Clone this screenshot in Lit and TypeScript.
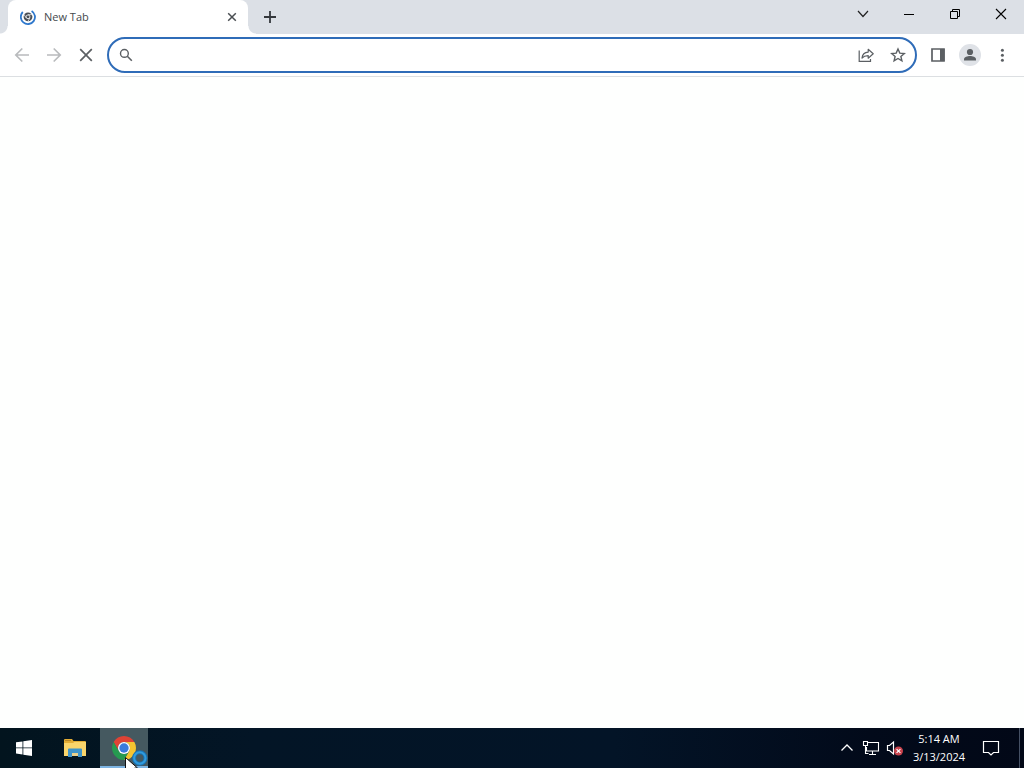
import { LitElement, html, css } from "lit";
import { customElement } from "lit/decorators.js";

const sector = (color: string, turn: number) => html`
  <svg class="sector" viewBox="0 0 24 24" aria-hidden="true">
    <g transform="rotate(${turn} 12 12)">
      <path fill="${color}" d="M1.61 6A12 12 0 0 1 22.39 6H12A6 6 0 0 0 6.8 15Z" />
    </g>
  </svg>
`;

@customElement("browser-tabs")
export class BrowserTabs extends LitElement {
  static styles = css`
    :host {
      display: flex;
      align-items: stretch;
      height: 34px;
      background: #dce0e6;
    }
    .edge {
      width: 8px;
    }
    .edge.left {
      background: radial-gradient(circle at 0 0, #dce0e6 7px, #fff 8px) 0 26px / 8px 8px no-repeat;
    }
    .edge.right {
      background: radial-gradient(circle at 100% 0, #dce0e6 7px, #fff 8px) 0 26px / 8px 8px no-repeat;
    }
    .tab {
      display: flex;
      align-items: center;
      box-sizing: border-box;
      width: 240px;
      padding: 0 8px 0 12px;
      gap: 8px;
      background: #fff;
      border-radius: 8px 8px 0 0;
    }
    .title {
      flex: 1;
      font-size: 11px;
      line-height: 16px;
      color: #45494d;
    }
    button {
      display: grid;
      place-items: center;
      padding: 0;
      border: 0;
      background: none;
      font: inherit;
    }
    .close {
      width: 16px;
      height: 16px;
    }
    .add {
      width: 28px;
      height: 34px;
    }
    .window {
      display: flex;
      margin-left: auto;
    }
    .window button {
      width: 46px;
      height: 28px;
    }
    svg {
      display: block;
    }
  `;

  render() {
    return html`
      <span class="edge left"></span>
      <div class="tab">
        <svg width="16" height="16" viewBox="0 0 16 16" fill="none" aria-hidden="true">
          <path d="M2.8 3A7.1 7.1 0 1 0 11.6 1.9" stroke="#2f78cc" stroke-width="1.8" />
          <circle cx="8" cy="7.8" r="4.4" fill="#4b4f55" />
          <circle cx="8" cy="7.8" r="1.9" fill="#4b4f55" stroke="#eceef0" stroke-width=".9" />
          <path d="M8 5.700h4M6.100 8.900 4.100 5.500M9.900 8.900 8 12.300" stroke="#eceef0" stroke-width=".8" />
        </svg>
        <span class="title">New Tab</span>
        <button class="close" aria-label="Close tab">
          <svg width="16" height="16" viewBox="0 0 16 16" fill="none" stroke="#4a4e52" stroke-width="1.500">
            <path d="m4.200 4.200 7.600 7.600M11.800 4.200l-7.600 7.600" />
          </svg>
        </button>
      </div>
      <span class="edge right"></span>
      <button class="add" aria-label="New tab">
        <svg width="14" height="14" viewBox="0 0 14 14" fill="none" stroke="#34383c" stroke-width="1.800">
          <path d="M1 7h12M7 1v12" />
        </svg>
      </button>
      <div class="window">
        <button aria-label="Search tabs">
          <svg width="12" height="12" viewBox="0 0 12 12" fill="none" stroke="#222" stroke-width="1.200">
            <path d="m1 3 5 5.500L11 3" />
          </svg>
        </button>
        <button aria-label="Minimize">
          <svg width="10" height="10" viewBox="0 0 10 10" stroke="#000"><path d="M0 5.500h10" /></svg>
        </button>
        <button aria-label="Restore">
          <svg width="10" height="10" viewBox="0 0 10 10" fill="none" stroke="#000">
            <path d="M.5 2.500h7v7h-7zM2.500 2.500v-2h7v7h-2" />
          </svg>
        </button>
        <button aria-label="Close">
          <svg width="12" height="12" viewBox="0 0 12 12" stroke="#000" stroke-width="1.100">
            <path d="m1 1 10 10M11 1 1 11" />
          </svg>
        </button>
      </div>
    `;
  }
}

@customElement("browser-toolbar")
export class BrowserToolbar extends LitElement {
  static styles = css`
    :host {
      display: flex;
      align-items: center;
      gap: 7px;
      height: 42px;
      padding: 0 8px;
      background: #fff;
      border-bottom: 1px solid #dcdfe2;
    }
    .group {
      display: flex;
      gap: 4px;
    }
    button {
      display: grid;
      place-items: center;
      width: 28px;
      height: 28px;
      padding: 0;
      border: 0;
      background: none;
      color: #5b5f63;
    }
    .faded {
      color: #b9bbbd;
    }
    .box {
      display: flex;
      align-items: center;
      flex: 1;
      gap: 4px;
      box-sizing: border-box;
      height: 36px;
      padding: 0 3px;
      border: 2px solid #2f6cb8;
      border-radius: 18px;
    }
    input {
      flex: 1;
      min-width: 0;
      padding: 0;
      border: 0;
      outline: 0;
      background: none;
      font-family: "Open Sans", sans-serif;
      font-size: 13px;
    }
    svg {
      display: block;
    }
  `;

  render() {
    return html`
      <div class="group">
        <button class="faded" aria-label="Back">
          <svg width="16" height="16" viewBox="0 0 16 16" fill="none" stroke="currentColor" stroke-width="1.700">
            <path d="M15 8H2M8.300 1.500 1.800 8l6.500 6.500" />
          </svg>
        </button>
        <button class="faded" aria-label="Forward">
          <svg width="16" height="16" viewBox="0 0 16 16" fill="none" stroke="currentColor" stroke-width="1.700">
            <path d="M1 8h13M7.700 1.500 14.200 8l-6.500 6.500" />
          </svg>
        </button>
        <button aria-label="Stop">
          <svg width="14" height="14" viewBox="0 0 14 14" stroke="currentColor" stroke-width="1.700">
            <path d="m1.200 1.200 11.600 11.600M12.800 1.200 1.200 12.800" />
          </svg>
        </button>
      </div>
      <div class="box">
        <button aria-label="Search">
          <svg width="14" height="14" viewBox="0 0 14 14" fill="none" stroke="currentColor" stroke-width="1.400">
            <circle cx="5.400" cy="5.400" r="3.900" />
            <path d="m8.300 8.300 4.500 4.500" stroke-width="1.600" />
          </svg>
        </button>
        <input type="text" aria-label="Address and search bar" />
        <button aria-label="Share">
          <svg width="16" height="16" viewBox="0 0 16 16" fill="none" stroke="currentColor" stroke-width="1.200">
            <path d="M1.200 3.500v10.900h11.300v-2.400" />
            <path d="M4 11c.4-3.700 2.700-5.600 6.200-5.900V2.300l5 4.500-5 4.400V8.600C7.500 8.600 5.500 9.300 4 11Z" stroke-linejoin="round" />
          </svg>
        </button>
        <button aria-label="Bookmark this tab">
          <svg width="16" height="16" viewBox="0 0 16 16" fill="none" stroke="currentColor" stroke-width="1.400">
            <path d="m8 2 1.800 4.100 4.500.4-3.400 2.900 1 4.400L8 11.500l-3.900 2.300 1-4.400L1.700 6.500l4.500-.4Z" />
          </svg>
        </button>
      </div>
      <div class="group">
        <button aria-label="Side panel">
          <svg width="14" height="14" viewBox="0 0 14 14" fill="none">
            <path d="M1 1h12v12H1z" stroke="currentColor" stroke-width="1.700" />
            <path d="M9 1h4.500v12H9z" fill="currentColor" />
          </svg>
        </button>
        <button aria-label="Profile">
          <svg width="22" height="22" viewBox="0 0 22 22">
            <circle cx="11" cy="11" r="11" fill="#dfe2e7" />
            <circle cx="11" cy="8" r="3.100" fill="currentColor" />
            <path d="M5 16.500v-1.300c0-2.100 3.500-3.200 6-3.200s6 1.100 6 3.200v1.300Z" fill="currentColor" />
          </svg>
        </button>
        <button aria-label="Menu">
          <svg width="4" height="14" viewBox="0 0 4 14" fill="currentColor">
            <circle cx="2.400" cy="2.200" r="1.500" />
            <circle cx="2.400" cy="7.200" r="1.500" />
            <circle cx="2.400" cy="12.200" r="1.500" />
          </svg>
        </button>
      </div>
    `;
  }
}

@customElement("desktop-taskbar")
export class DesktopTaskbar extends LitElement {
  static styles = css`
    :host {
      display: flex;
      align-items: stretch;
      height: 40px;
      background: linear-gradient(90deg, #02141e, #031526 25%, #031427 60%, #020a1a 85%, #020817);
      color: #fff;
    }
    button {
      display: grid;
      place-items: center;
      box-sizing: border-box;
      padding: 0;
      border: 0;
      background: none;
      color: inherit;
      font: inherit;
    }
    .apps {
      display: flex;
      gap: 2px;
    }
    .apps button {
      width: 48px;
    }
    .apps .active {
      position: relative;
      background: #455960;
      box-shadow: inset 0 -2px #7db4e2;
    }
    .chrome {
      display: grid;
      width: 24px;
      height: 24px;
    }
    .chrome > svg {
      grid-area: 1 / 1;
      width: 24px;
      height: 24px;
    }
    .pointer {
      position: absolute;
      left: 25px;
      top: 21px;
    }
    .tray {
      display: flex;
      margin-left: auto;
    }
    .tray .small {
      width: 24px;
    }
    .clock {
      width: 64px;
      font-size: 11px;
      line-height: 18px;
      text-align: center;
    }
    .clock span {
      display: block;
    }
    .notice {
      width: 40px;
    }
    .desktop {
      width: 5px;
      margin-left: 8px;
      border-left: 1px solid #455064;
    }
    svg {
      display: block;
    }
  `;

  render() {
    return html`
      <div class="apps">
        <button aria-label="Start">
          <svg width="16" height="16" viewBox="0 0 16 16" fill="#fff">
            <path d="M0 2.300 6.500 1.400V7.500H0ZM7.300 1.300 16 0v7.500H7.300ZM0 8.300h6.500v6.200L0 13.600ZM7.300 8.300H16V16l-8.700-1.300Z" />
          </svg>
        </button>
        <button aria-label="File Explorer">
          <svg width="24" height="20" viewBox="-2 0 24 20">
            <path d="M0 2q0-1 1-1h7l1.500 2H21q1 0 1 1v13H0Z" fill="#e3ad35" />
            <path d="M0 5h9l1.500-1H22v14H0Z" fill="#fad56b" />
            <path d="M1 2h6v1H1z" fill="#b98727" />
            <path d="M4 11.500q0-1 1-1h12q1 0 1 1V19h-4v-4H8v4H4Z" fill="#3f94c9" />
            <path d="M8 15h6v3H8z" fill="#ead08a" />
          </svg>
        </button>
        <button class="active" aria-label="Google Chrome">
          <span class="chrome">
            ${sector("#df4335", 0)}${sector("#f5c430", 120)}${sector("#269a50", 240)}
            <svg viewBox="0 0 24 24" aria-hidden="true">
              <circle cx="12" cy="12" r="6" fill="#fff" />
              <circle cx="12" cy="12" r="4.700" fill="#397bdd" />
            </svg>
          </span>
          <svg class="pointer" width="24" height="19" viewBox="0 0 24 19" aria-hidden="true">
            <circle cx="14.800" cy="9" r="5.700" fill="none" stroke="#1773b5" stroke-width="4" />
            <circle cx="14.800" cy="9" r="5.700" fill="none" stroke="#319bdc" stroke-width="2" />
            <path d="M.5 8.500V24L4 20.500 7 27h5L9.500 19h3Z" fill="#fff" stroke="#111" />
          </svg>
        </button>
      </div>
      <div class="tray">
        <button class="small" aria-label="Show hidden icons">
          <svg width="14" height="14" viewBox="0 0 14 14" fill="none" stroke="#fff" stroke-width="1.300">
            <path d="m1.500 9.500 5.500-5.500 5.500 5.500" />
          </svg>
        </button>
        <button class="small" aria-label="Network">
          <svg width="18" height="16" viewBox="0 0 18 16" fill="none" stroke="#fff" stroke-width="1.100">
            <path d="M6 2.500h10.500v8.500H4.500V7M10.500 11v3M7 14.500h7M1.500 1.500h4v4h-4zM3.500 5.500v8h3" />
          </svg>
        </button>
        <button class="small" aria-label="Volume">
          <svg width="18" height="16" viewBox="0 0 18 16" fill="none">
            <path d="M1.500 5.500h2l4-3.500v12l-4-3.500h-2z" stroke="#fff" stroke-width="1.200" />
            <circle cx="12.500" cy="11" r="4.500" fill="#c8434d" />
            <path d="m10.600 9.100 3.800 3.800M14.400 9.100l-3.800 3.800" stroke="#fff" stroke-width="1.200" />
          </svg>
        </button>
        <button class="clock" aria-label="Date and time">
          <span><span>5:14 AM</span><span>3/13/2024</span></span>
        </button>
        <button class="notice" aria-label="Notifications">
          <svg width="18" height="18" viewBox="0 0 18 18" fill="none" stroke="#fff" stroke-width="1.200">
            <path d="M1.500 2.500h15v11h-5L9 16l-2.500-2.500h-5Z" />
          </svg>
        </button>
        <button class="desktop" aria-label="Show desktop"></button>
      </div>
    `;
  }
}

@customElement("app-root")
export class AppRoot extends LitElement {
  static styles = css`
    :host {
      display: flex;
      flex-direction: column;
      min-height: 100vh;
      background: #fefffe;
      font-family: "Open Sans", sans-serif;
    }
    main {
      flex: 1;
    }
  `;

  render() {
    return html`
      <browser-tabs></browser-tabs>
      <browser-toolbar></browser-toolbar>
      <main></main>
      <desktop-taskbar></desktop-taskbar>
    `;
  }
}
